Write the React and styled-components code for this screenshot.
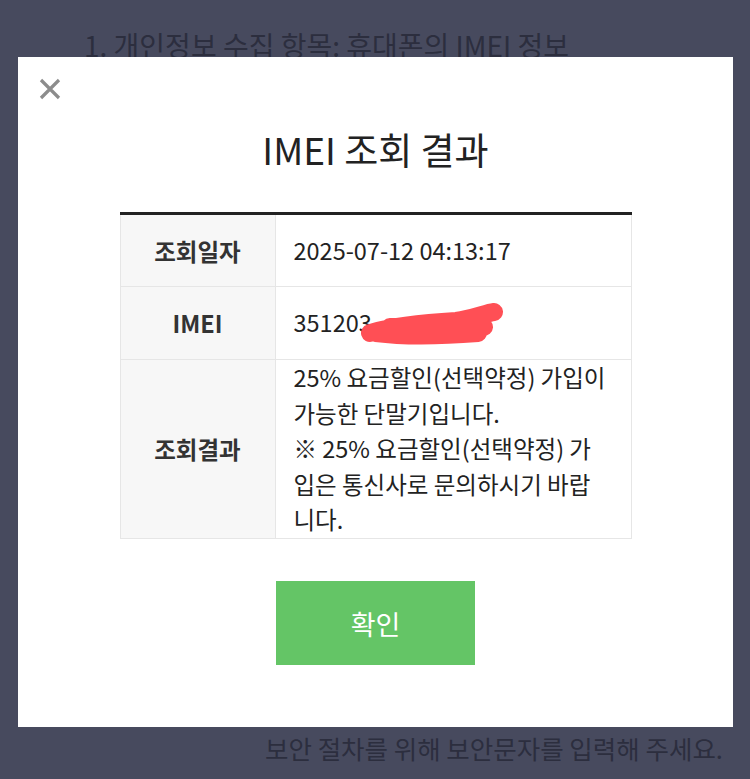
import styled, { createGlobalStyle } from "styled-components";

const GlobalStyle = createGlobalStyle`
  html, body {
    margin: 0;
    padding: 0;
    background: #474a5e;
    font-family: "Noto Sans CJK KR", "Noto Sans", sans-serif;
  }
`;

const Page = styled.div`
  width: 750px;
  height: 779px;
  overflow: hidden;
  display: flex;
  flex-direction: column;
  align-items: stretch;
  background: #474a5e;
`;

const BackTop = styled.div`
  height: 57px;
  display: flex;
  align-items: flex-end;
  padding-left: 84px;
  overflow: hidden;
  color: #2c2e3e;
  font-size: 28px;
  line-height: 24px;
  white-space: nowrap;
`;

const BackBottom = styled.div`
  flex: 1;
  padding: 5px 0 0 265px;
  color: #2c2e3e;
  font-size: 25.5px;
  line-height: 32px;
  white-space: nowrap;
`;

const Modal = styled.div`
  margin: 0 17px 0 18px;
  height: 670px;
  background: #fff;
  position: relative;
  display: flex;
  flex-direction: column;
  align-items: center;
`;

const CloseButton = styled.button`
  position: absolute;
  left: 20px;
  top: 20px;
  width: 24px;
  height: 24px;
  padding: 0;
  border: 0;
  background: none;
  cursor: pointer;
`;

const Title = styled.h2`
  margin: 68px 0 0;
  font-size: 37px;
  font-weight: 400;
  color: #222;
  line-height: 48px;
`;

const Table = styled.table`
  margin-top: 39px;
  width: 512px;
  border-collapse: collapse;
  border-top: 3px solid #222;
`;

const Th = styled.th`
  width: 154px;
  background: #f7f7f7;
  border: 1px solid #e6e6e6;
  border-top: 0;
  font-size: 23.5px;
  font-weight: 700;
  color: #333;
  text-align: center;
  height: ${(p) => p.$h}px;
  padding: 0;
`;

const Td = styled.td`
  border: 1px solid #e6e6e6;
  border-top: 0;
  padding: 0 18px;
  font-size: 23.5px;
  color: #222;
  line-height: 35.5px;
  position: relative;
`;

const Scribble = styled.svg`
  position: absolute;
  left: 84px;
  top: 14px;
`;

const ConfirmButton = styled.button`
  margin-top: 42px;
  width: 199px;
  height: 84px;
  border: 0;
  background: #64c566;
  color: #fff;
  font-family: inherit;
  font-size: 27px;
  cursor: pointer;
`;

export default function App() {
  return (
    <Page>
      <GlobalStyle />
      <BackTop>1. 개인정보 수집 항목: 휴대폰의 IMEI 정보</BackTop>
      <Modal>
        <CloseButton aria-label="닫기">
          <svg width="24" height="24" viewBox="0 0 24 24">
            <path d="M3 3 L21 21 M21 3 L3 21" stroke="#8c8c8c" strokeWidth="3.2" />
          </svg>
        </CloseButton>
        <Title>IMEI 조회 결과</Title>
        <Table>
          <tbody>
            <tr>
              <Th $h={71}>조회일자</Th>
              <Td>2025-07-12 04:13:17</Td>
            </tr>
            <tr>
              <Th $h={72}>IMEI</Th>
              <Td>
                351203
                <Scribble width="145" height="44" viewBox="0 0 145 44">
                  <path
                    d="M10 32 C 30 26, 60 22, 96 20 C 112 18, 126 12, 134 11 M16 32 C 40 35, 80 35, 118 32 M30 26 C 70 25, 100 24, 124 26"
                    stroke="#ff4f55"
                    strokeWidth="18"
                    strokeLinecap="round"
                    strokeLinejoin="round"
                    fill="none"
                  />
                </Scribble>
              </Td>
            </tr>
            <tr>
              <Th $h={178}>조회결과</Th>
              <Td>
                25% 요금할인(선택약정) 가입이
                <br />
                가능한 단말기입니다.
                <br />※ 25% 요금할인(선택약정) 가
                <br />
                입은 통신사로 문의하시기 바랍
                <br />
                니다.
              </Td>
            </tr>
          </tbody>
        </Table>
        <ConfirmButton>확인</ConfirmButton>
      </Modal>
      <BackBottom>보안 절차를 위해 보안문자를 입력해 주세요.</BackBottom>
    </Page>
  );
}
